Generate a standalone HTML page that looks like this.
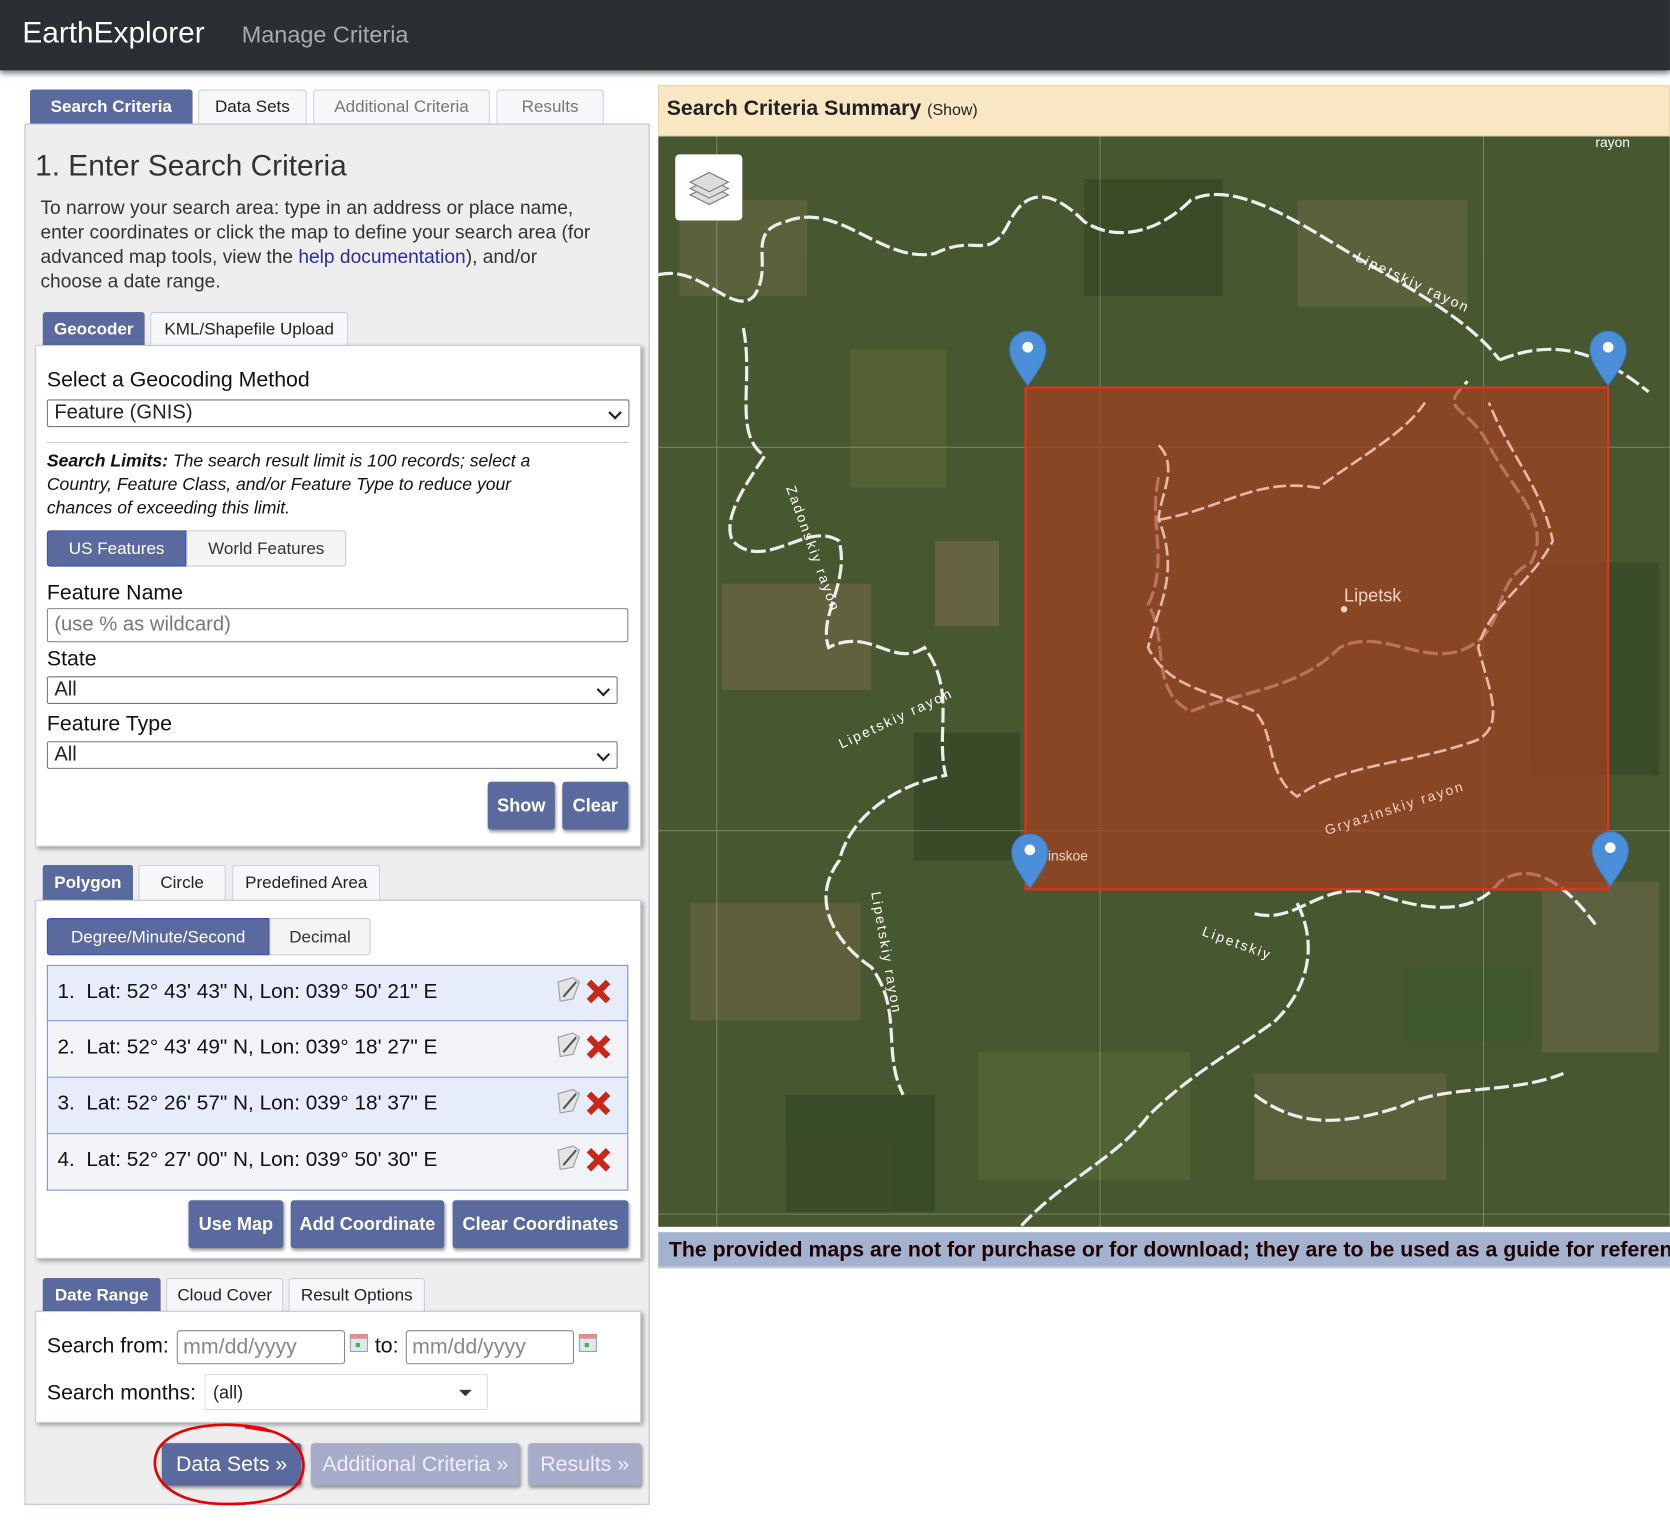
<!DOCTYPE html>
<html><head><meta charset="utf-8"><style>
*{box-sizing:border-box;margin:0;padding:0}
html,body{width:1670px;height:1522px;overflow:hidden;background:#fff;font-family:"Liberation Sans",Arial,sans-serif;color:#222}
#w{position:absolute;left:0;top:0;width:1568px;height:1430px;transform:scale(1.065);transform-origin:0 0}
.a{position:absolute}
.hdr{left:0;top:0;width:1568px;height:66px;background:#2b2e33;box-shadow:0 3px 5px rgba(0,0,0,.5)}
.tab{position:absolute;border:1px solid #c5cbe0;border-bottom:none;background:#f7f7f9;text-align:center;font-size:16px;border-radius:3px 3px 0 0}
.tab.on{background:#5b6a9e;color:#fff;font-weight:bold;border-color:#5b6a9e}
.box{position:absolute;background:#fff;border:1px solid #c5cbe0;box-shadow:2px 2px 4px rgba(0,0,0,.35)}
.btn{position:absolute;background:#5b6a9e;color:#fff;font-weight:bold;font-size:17px;text-align:center;border-radius:3px;box-shadow:1px 2px 3px rgba(0,0,0,.4)}
.sel{position:absolute;border:1px solid #777;border-radius:2px;background:#fff;font-size:19px;padding-left:6px}
.sel:after{content:"";position:absolute;right:8px;top:7px;width:7px;height:7px;border-right:2px solid #222;border-bottom:2px solid #222;transform:rotate(45deg)}
.lbl{position:absolute;font-size:20px;color:#111}
.row{position:absolute;left:44px;width:546px;height:53px;border:1px solid #7d8fd0;font-size:19.5px;padding:13px 0 0 9px;color:#111}
.ic{position:absolute;right:10px;top:9px;width:60px;height:30px}
</style></head><body><div id="w">
<div class="a hdr"></div>
<div class="a" style="left:21px;top:15px;font-size:28px;color:#fff">EarthExplorer</div>
<div class="a" style="left:227px;top:20px;font-size:22px;color:#a9abae">Manage Criteria</div>

<div class="tab on" style="left:28px;top:84px;width:153px;height:32px;line-height:32px">Search Criteria</div>
<div class="tab" style="left:186px;top:84px;width:102px;height:32px;line-height:32px">Data Sets</div>
<div class="tab" style="left:294px;top:84px;width:166px;height:32px;line-height:32px;color:#777">Additional Criteria</div>
<div class="tab" style="left:466px;top:84px;width:101px;height:32px;line-height:32px;color:#777">Results</div>
<div class="a" style="left:23px;top:116px;width:587px;height:1297px;background:#eee;border:1px solid #b8c0dc"></div>
<div class="a" style="left:33px;top:140px;font-size:28px;color:#333">1. Enter Search Criteria</div>
<div class="a" style="left:38px;top:184px;width:555px;font-size:18px;line-height:23px;color:#333">To narrow your search area: type in an address or place name,<br>enter coordinates or click the map to define your search area (for advanced map tools, view the <span style="color:#2a2aa5">help documentation</span>), and/or<br>choose a date range.</div>

<div class="tab on" style="left:40px;top:293px;width:96px;height:31px;line-height:31px">Geocoder</div>
<div class="tab" style="left:141px;top:293px;width:186px;height:31px;line-height:31px">KML/Shapefile Upload</div>
<div class="box" style="left:33px;top:324px;width:569px;height:471px"></div>
<div class="lbl" style="left:44px;top:346px">Select a Geocoding Method</div>
<div class="sel" style="left:44px;top:375px;width:547px;height:26px;line-height:24px">Feature (GNIS)</div>
<div class="a" style="left:44px;top:415px;width:547px;height:1px;background:#ccc"></div>
<div class="a" style="left:44px;top:422px;width:540px;font-size:16.5px;line-height:22px;font-style:italic;color:#111"><b>Search Limits:</b> The search result limit is 100 records; select a<br>Country, Feature Class, and/or Feature Type to reduce your<br>chances of exceeding this limit.</div>
<div class="a" style="left:44px;top:498px;width:131px;height:34px;background:#5b6a9e;color:#fff;font-size:16px;line-height:34px;text-align:center;border:1px solid #3d4fb0;border-radius:3px 0 0 3px">US Features</div>
<div class="a" style="left:175px;top:498px;width:150px;height:34px;background:#f5f5f5;color:#333;font-size:16px;line-height:34px;text-align:center;border:1px solid #ccc;border-radius:0 3px 3px 0">World Features</div>
<div class="lbl" style="left:44px;top:546px">Feature Name</div>
<div class="a" style="left:44px;top:571px;width:546px;height:32px;border:1px solid #888;border-radius:2px;background:#fff;font-size:19px;color:#777;padding:4px 0 0 6px">(use % as wildcard)</div>
<div class="lbl" style="left:44px;top:608px">State</div>
<div class="sel" style="left:44px;top:635px;width:536px;height:26px;line-height:24px">All</div>
<div class="lbl" style="left:44px;top:669px">Feature Type</div>
<div class="sel" style="left:44px;top:696px;width:536px;height:26px;line-height:24px">All</div>
<div class="btn" style="left:458px;top:734px;width:63px;height:45px;line-height:45px">Show</div>
<div class="btn" style="left:528px;top:734px;width:62px;height:45px;line-height:45px">Clear</div>

<div class="tab on" style="left:40px;top:812px;width:85px;height:33px;line-height:33px">Polygon</div>
<div class="tab" style="left:130px;top:812px;width:82px;height:33px;line-height:33px">Circle</div>
<div class="tab" style="left:218px;top:812px;width:139px;height:33px;line-height:33px">Predefined Area</div>
<div class="box" style="left:33px;top:845px;width:569px;height:337px"></div>
<div class="a" style="left:44px;top:862px;width:209px;height:35px;background:#5b6a9e;color:#fff;font-size:16px;line-height:35px;text-align:center;border:1px solid #3d4fb0;border-radius:3px 0 0 3px">Degree/Minute/Second</div>
<div class="a" style="left:253px;top:862px;width:95px;height:35px;background:#f5f5f5;color:#333;font-size:16px;line-height:35px;text-align:center;border:1px solid #ccc;border-radius:0 3px 3px 0">Decimal</div>
<div class="row" style="top:906px;background:#e6ecf9">1.&nbsp; Lat: 52° 43' 43" N, Lon: 039° 50' 21" E<svg class="ic" viewBox="0 0 60 30"><path d="M5 6l14-4 6 4-6 16-12 2z" fill="#e4e4e4" stroke="#999"/><path d="M10 20l12-14" stroke="#555" stroke-width="2"/><path d="M34 6l18 18M52 6L34 24" stroke="#c8281a" stroke-width="6"/></svg></div>
<div class="row" style="top:959px;background:#f2f3f6;border-top:none">2.&nbsp; Lat: 52° 43' 49" N, Lon: 039° 18' 27" E<svg class="ic" viewBox="0 0 60 30"><path d="M5 6l14-4 6 4-6 16-12 2z" fill="#e4e4e4" stroke="#999"/><path d="M10 20l12-14" stroke="#555" stroke-width="2"/><path d="M34 6l18 18M52 6L34 24" stroke="#c8281a" stroke-width="6"/></svg></div>
<div class="row" style="top:1012px;background:#e6ecf9;border-top:none">3.&nbsp; Lat: 52° 26' 57" N, Lon: 039° 18' 37" E<svg class="ic" viewBox="0 0 60 30"><path d="M5 6l14-4 6 4-6 16-12 2z" fill="#e4e4e4" stroke="#999"/><path d="M10 20l12-14" stroke="#555" stroke-width="2"/><path d="M34 6l18 18M52 6L34 24" stroke="#c8281a" stroke-width="6"/></svg></div>
<div class="row" style="top:1065px;background:#f2f3f6;border-top:none">4.&nbsp; Lat: 52° 27' 00" N, Lon: 039° 50' 30" E<svg class="ic" viewBox="0 0 60 30"><path d="M5 6l14-4 6 4-6 16-12 2z" fill="#e4e4e4" stroke="#999"/><path d="M10 20l12-14" stroke="#555" stroke-width="2"/><path d="M34 6l18 18M52 6L34 24" stroke="#c8281a" stroke-width="6"/></svg></div>
<div class="btn" style="left:177px;top:1127px;width:89px;height:45px;line-height:45px">Use Map</div>
<div class="btn" style="left:273px;top:1127px;width:144px;height:45px;line-height:45px">Add Coordinate</div>
<div class="btn" style="left:425px;top:1127px;width:165px;height:45px;line-height:45px">Clear Coordinates</div>

<div class="tab on" style="left:40px;top:1200px;width:111px;height:31px;line-height:31px">Date Range</div>
<div class="tab" style="left:156px;top:1200px;width:110px;height:31px;line-height:31px">Cloud Cover</div>
<div class="tab" style="left:271px;top:1200px;width:128px;height:31px;line-height:31px">Result Options</div>
<div class="box" style="left:33px;top:1231px;width:569px;height:105px"></div>
<div class="lbl" style="left:44px;top:1253px">Search from:</div>
<div class="a" style="left:166px;top:1249px;width:158px;height:32px;border:1px solid #888;border-radius:3px;background:#fff;font-size:20px;color:#888;padding:4px 0 0 5px">mm/dd/yyyy</div>
<svg class="a" style="left:328px;top:1252px" width="18" height="18"><rect x="1" y="1" width="16" height="16" fill="#dfe7f3" stroke="#8aa"/><rect x="1" y="1" width="16" height="4" fill="#e88"/><rect x="6" y="9" width="4" height="4" fill="#5a5"/></svg>
<div class="lbl" style="left:352px;top:1253px">to:</div>
<div class="a" style="left:381px;top:1249px;width:158px;height:32px;border:1px solid #888;border-radius:3px;background:#fff;font-size:20px;color:#888;padding:4px 0 0 5px">mm/dd/yyyy</div>
<svg class="a" style="left:543px;top:1252px" width="18" height="18"><rect x="1" y="1" width="16" height="16" fill="#dfe7f3" stroke="#8aa"/><rect x="1" y="1" width="16" height="4" fill="#e88"/><rect x="6" y="9" width="4" height="4" fill="#5a5"/></svg>
<div class="lbl" style="left:44px;top:1297px">Search months:</div>
<div class="a" style="left:192px;top:1290px;width:266px;height:34px;border:1px solid #ddd;background:#fff;font-size:17px;padding:7px 0 0 7px">(all)<span style="position:absolute;right:14px;top:14px;border:6px solid transparent;border-top:6px solid #333"></span></div>

<div class="btn" style="left:152px;top:1355px;width:131px;height:40px;line-height:40px;font-weight:normal;font-size:20px">Data Sets »</div>
<div class="btn" style="left:292px;top:1355px;width:196px;height:40px;line-height:40px;font-weight:normal;font-size:20px;background:#a6acc8;color:#eef">Additional Criteria »</div>
<div class="btn" style="left:496px;top:1355px;width:106px;height:40px;line-height:40px;font-weight:normal;font-size:20px;background:#a6acc8;color:#eef">Results »</div>
<svg class="a" style="left:135px;top:1332px" width="160" height="86"><path d="M115 10C80 2 30 4 14 28C2 50 20 78 70 80C120 82 150 70 150 44C150 20 120 8 95 8L120 12" fill="none" stroke="#e80000" stroke-width="2.5"/></svg>

<div class="a" style="left:618px;top:80px;width:950px;height:48px;background:#f9e6c3;border:1px solid #e8d3a8"></div>
<div class="a" style="left:626px;top:91px;font-size:20px;font-weight:bold;color:#222">Search Criteria Summary <span style="font-size:15px;font-weight:normal">(Show)</span></div>
<svg class="a" style="left:618px;top:128px" width="950" height="1024" viewBox="0 0 950 1024">
<rect width="950" height="1024" fill="#475730"/>
<g opacity=".55">
<rect x="20" y="60" width="120" height="90" fill="#6b6a43"/><rect x="180" y="200" width="90" height="130" fill="#5d6a38"/>
<rect x="60" y="420" width="140" height="100" fill="#786a4a"/><rect x="240" y="560" width="100" height="120" fill="#2f4024"/>
<rect x="30" y="720" width="160" height="110" fill="#6f6845"/><rect x="400" y="40" width="130" height="110" fill="#2e4120"/>
<rect x="600" y="60" width="160" height="100" fill="#6a6a46"/><rect x="820" y="400" width="120" height="200" fill="#2d4522"/>
<rect x="830" y="700" width="110" height="160" fill="#706a4c"/><rect x="300" y="860" width="200" height="120" fill="#5a6b3a"/>
<rect x="560" y="880" width="180" height="100" fill="#6e6646"/><rect x="120" y="900" width="140" height="110" fill="#2f4426"/>
<rect x="260" y="380" width="60" height="80" fill="#7e7050"/><rect x="700" y="780" width="120" height="70" fill="#3a5a2a"/>
</g>
<g stroke="rgba(255,255,255,.25)" stroke-width="1"><path d="M55 0V1024M415 0V1024M775 0V1024M0 292H950M0 652H950M0 1012H950"/></g>
<g fill="none" stroke="#eee" stroke-width="3" stroke-dasharray="14 4">
<path d="M0 130C40 120 70 170 90 150 110 120 80 90 120 80 170 60 210 120 260 110 300 90 310 120 330 80 350 40 380 60 400 80 430 100 470 90 500 60 540 40 600 80 650 110 700 140 760 170 790 210"/>
<path d="M790 210C840 190 880 200 930 240 950 260"/>
<path d="M80 180C90 230 70 280 100 300 80 330 60 360 70 380 100 410 140 360 170 380 180 420 150 450 160 480 200 460 220 500 250 480 280 520 260 560 270 600 220 610 180 640 170 680 140 720 170 760 200 780 230 820 210 860 230 900 200 930 240 950"/>
<path d="M470 320C460 360 480 400 460 440 480 470 460 520 500 540 550 520 600 520 640 480 680 460 720 500 760 480 800 460 780 420 820 400 840 360 800 330 780 290 760 250 730 260 760 230"/>
<path d="M560 730C600 740 620 700 670 710 700 720 760 740 790 700 820 680 850 700 880 740"/>
<path d="M600 720C620 760 610 800 580 830 540 860 500 880 460 920 430 960 380 980 340 1024"/>
<path d="M560 900C600 930 640 930 700 910 740 890 800 900 850 880 900 870 950 890"/>
</g>
<rect x="345" y="236" width="547" height="471" fill="#a43f20" fill-opacity=".7" stroke="#e8301d" stroke-width="2"/>
<g fill="none" stroke="#e6b8a8" stroke-width="2.5" stroke-dasharray="12 4">
<path d="M470 290C490 310 470 340 470 360 490 410 470 440 460 480 480 520 520 520 560 540 580 560 570 600 600 620 640 590 700 590 760 570 800 560 780 520 770 480 780 440 820 420 840 380 830 330 800 300 780 250"/>
<path d="M470 360C530 350 560 320 620 330 660 300 700 280 720 250"/>
</g>
<text x="644" y="437" font-size="17" fill="#f1d4c6" font-family="Liberation Sans">Lipetsk</text>
<circle cx="644" cy="444" r="3" fill="#f1d4c6"/>
<text x="366" y="680" font-size="13" fill="#f1d4c6" font-family="Liberation Sans">inskoe</text>
<text x="620" y="632" font-size="13" fill="#f1d4c6" font-family="Liberation Sans" transform="rotate(-18 700 620)" letter-spacing="2">Gryazinskiy rayon</text>
<text x="160" y="560" font-size="13" fill="#fff" font-family="Liberation Sans" transform="rotate(-25 200 540)" letter-spacing="2">Lipetskiy rayon</text>
<text x="640" y="140" font-size="13" fill="#fff" font-family="Liberation Sans" transform="rotate(25 700 160)" letter-spacing="2">Lipetskiy rayon</text>
<text x="880" y="10" font-size="13" fill="#fff" font-family="Liberation Sans">rayon</text>
<text x="120" y="330" font-size="13" fill="#fff" font-family="Liberation Sans" transform="rotate(70 120 330)" letter-spacing="2">Zadonskiy rayon</text>
<text x="200" y="710" font-size="13" fill="#fff" font-family="Liberation Sans" transform="rotate(80 200 710)" letter-spacing="2">Lipetskiy rayon</text>
<text x="510" y="750" font-size="13" fill="#fff" font-family="Liberation Sans" transform="rotate(20 510 750)" letter-spacing="2">Lipetskiy</text>
<g fill="#4a8fd8" stroke="#3a78c0"><path d="M347 234c-16-22-17-28-17-34a17 17 0 1134 0c0 6-1 12-17 34z"/><path d="M892 234c-16-22-17-28-17-34a17 17 0 1134 0c0 6-1 12-17 34z"/><path d="M349 706c-16-22-17-28-17-34a17 17 0 1134 0c0 6-1 12-17 34z"/><path d="M894 704c-16-22-17-28-17-34a17 17 0 1134 0c0 6-1 12-17 34z"/></g>
<g fill="#fff"><circle cx="347" cy="198" r="5"/><circle cx="892" cy="198" r="5"/><circle cx="349" cy="670" r="5"/><circle cx="894" cy="668" r="5"/></g>
<rect x="16" y="17" width="63" height="62" rx="4" fill="#fff"/>
<g fill="#ddd" stroke="#777"><path d="M30 55l18-9 18 9-18 9z"/><path d="M30 49l18-9 18 9-18 9z"/><path d="M30 43l18-9 18 9-18 9z"/></g>
</svg>
<div class="a" style="left:618px;top:1157px;width:950px;height:34px;background:#a2b2cf;border-bottom:2px solid #ccc;font-size:20px;font-weight:bold;color:#200;line-height:34px;padding-left:10px;white-space:nowrap;overflow:hidden">The provided maps are not for purchase or for download; they are to be used as a guide for reference</div>
</div></body></html>
